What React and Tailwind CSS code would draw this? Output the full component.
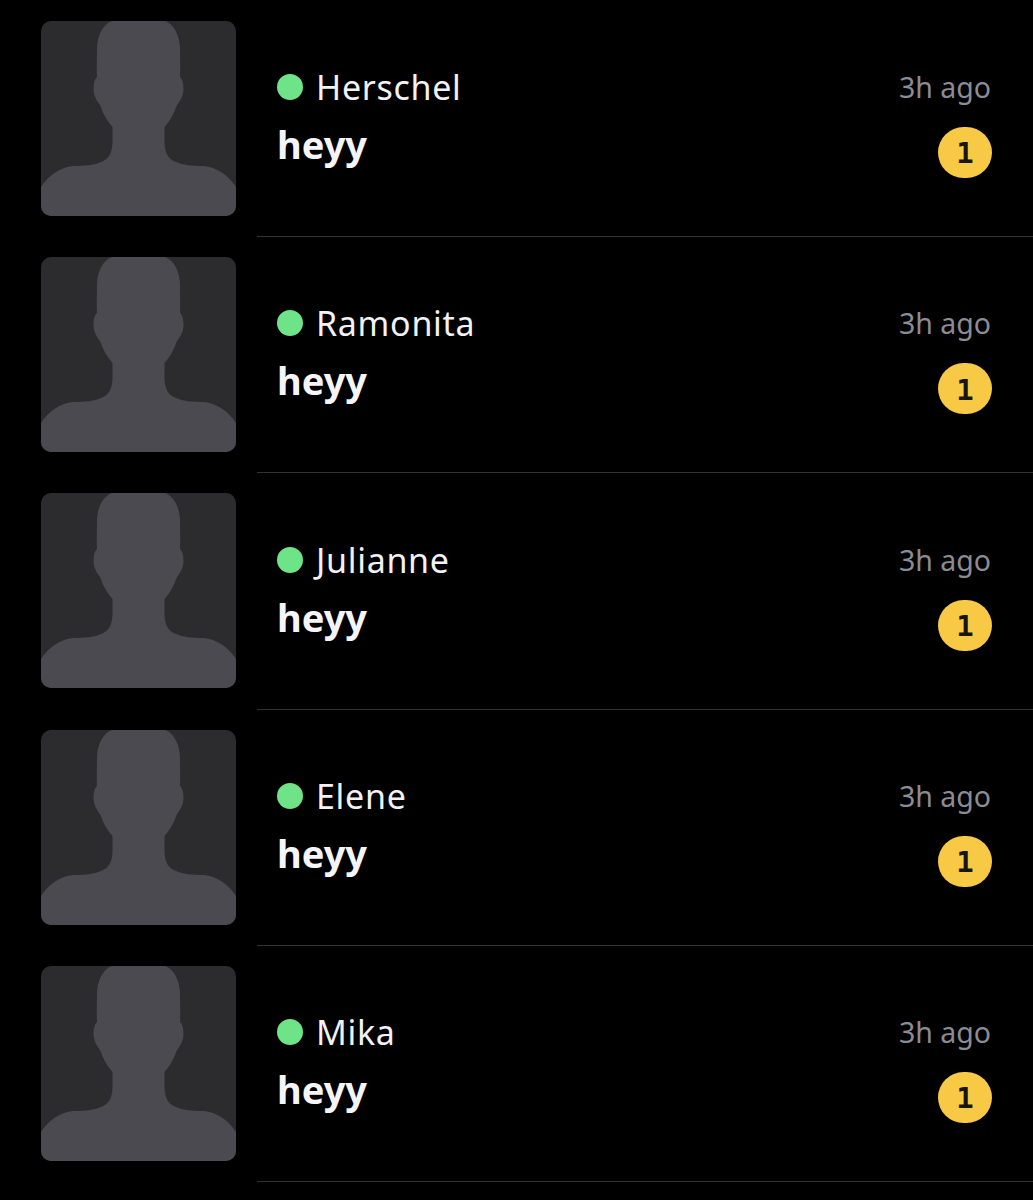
const conversations = [
  { id: 1, name: 'Herschel' },
  { id: 2, name: 'Ramonita' },
  { id: 3, name: 'Julianne' },
  { id: 4, name: 'Elene' },
  { id: 5, name: 'Mika' },
];

function Avatar() {
  return (
    <svg viewBox="0 0 195 195" className="block w-[195px] h-[195px] shrink-0 rounded-[10px] bg-[#2c2c2e]">
      <path
        fill="#4b4a51"
        d="M71 0 H124 C133 3 139 15 139 28 C139 38 139.5 48 139 56 C141.5 58 142.5 63 142.5 68 C142.5 75 139 80 135.5 85 C133 93 129 100 123.5 106 L123.5 122 C124 132 127 138 135 141 C142 144 150 145 163 145 C176 146 188 155 195 166 V195 H0 V166 C7 155 19 146 32 145 C45 145 53 144 60 141 C68 138 71 132 71.5 122 L71.5 106 C66 100 62 93 59.5 85 C56 80 52.5 75 52.5 68 C52.5 63 53.5 58 56 56 C55.5 48 56 38 56 28 C56 15 62 3 71 0 Z"
      />
    </svg>
  );
}

function ConversationRow({ name }) {
  return (
    <div className="flex h-[236.25px] pl-[41px]">
      <div className="pt-[20px]">
        <Avatar />
      </div>
      <div className="ml-[21px] flex flex-1 justify-between border-b border-[#333335] pr-[41px] pl-[20px]">
        <div className="flex flex-col pt-[64.25px]">
          <div className="flex items-center gap-[13px]">
            <span className="h-[26px] w-[26px] rounded-full bg-[#6fe388]" />
            <span className="text-[34px] leading-[44px] tracking-[0.7px] text-[#f2f2f4]">{name}</span>
          </div>
          <p className="mt-[13px] text-[38px] leading-[44px] font-bold text-[#f5f5f7]">heyy</p>
        </div>
        <div className="flex flex-col items-end pt-[64.25px]">
          <span className="mr-[1px] text-[28.5px] leading-[44px] text-[#8c8c94]">3h ago</span>
          <span className="mt-[18px] flex h-[51px] w-[54px] items-center justify-center rounded-full bg-[#f8c945] pt-[3px] font-['DejaVu_Sans_Mono',monospace] text-[29px] font-bold text-[#17150c]">
            1
          </span>
        </div>
      </div>
    </div>
  );
}

export default function App() {
  return (
    <div className="h-[1200px] overflow-hidden bg-black pt-[0.75px] font-['Noto_Sans',sans-serif]">
      {conversations.map((c) => (
        <ConversationRow key={c.id} name={c.name} />
      ))}
    </div>
  );
}
